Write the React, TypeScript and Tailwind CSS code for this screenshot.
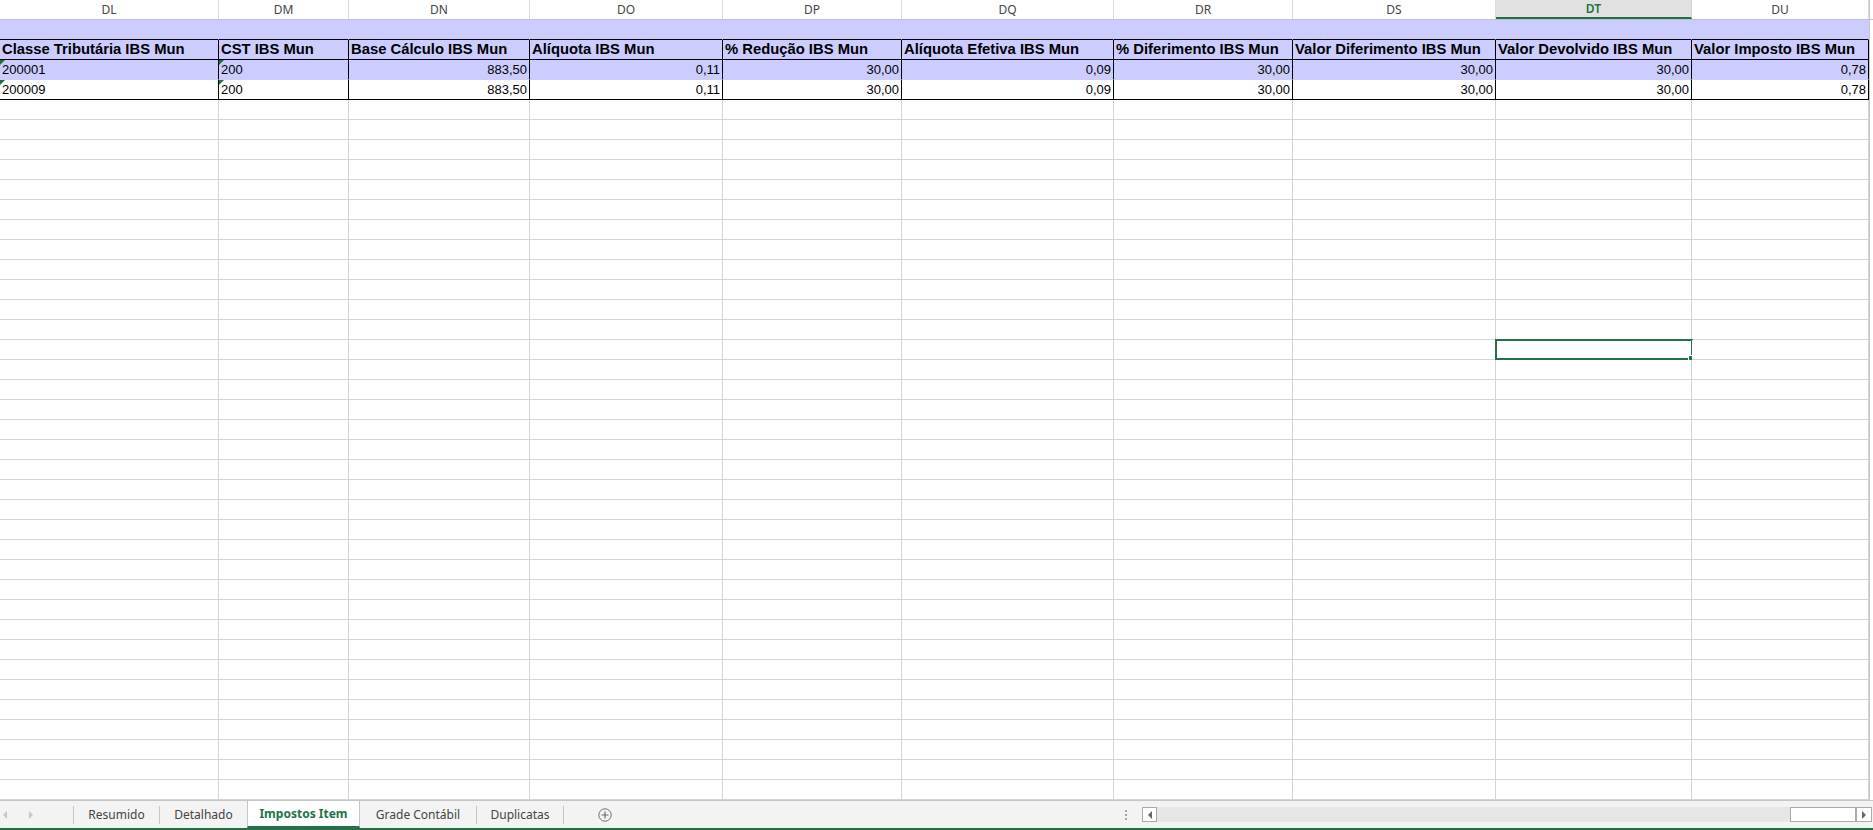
import React from 'react';

type Col = {
  id: string;
  w: string;
  head: string;
  v1: string;
  v2: string;
  right: boolean;
  flag?: boolean;
};

const cols: Col[] = [
  { id: 'DL', w: 'w-[219px]', head: 'Classe Tributária IBS Mun', v1: '200001', v2: '200009', right: false, flag: true },
  { id: 'DM', w: 'w-[130px]', head: 'CST IBS Mun', v1: '200', v2: '200', right: false, flag: true },
  { id: 'DN', w: 'w-[181px]', head: 'Base Cálculo IBS Mun', v1: '883,50', v2: '883,50', right: true },
  { id: 'DO', w: 'w-[193px]', head: 'Alíquota IBS Mun', v1: '0,11', v2: '0,11', right: true },
  { id: 'DP', w: 'w-[179px]', head: '% Redução IBS Mun', v1: '30,00', v2: '30,00', right: true },
  { id: 'DQ', w: 'w-[212px]', head: 'Alíquota Efetiva IBS Mun', v1: '0,09', v2: '0,09', right: true },
  { id: 'DR', w: 'w-[179px]', head: '% Diferimento IBS Mun', v1: '30,00', v2: '30,00', right: true },
  { id: 'DS', w: 'w-[203px]', head: 'Valor Diferimento IBS Mun', v1: '30,00', v2: '30,00', right: true },
  { id: 'DT', w: 'w-[196px]', head: 'Valor Devolvido IBS Mun', v1: '30,00', v2: '30,00', right: true },
  { id: 'DU', w: 'w-[177px]', head: 'Valor Imposto IBS Mun', v1: '0,78', v2: '0,78', right: true },
];

const ROWS = 39;
const SELECTED_ROW = 17;
const SELECTED_COL = 'DT';

// little green "number stored as text" marker
function Flag() {
  return (
    <svg className="absolute left-0 top-0" width="5" height="5" viewBox="0 0 5 5">
      <polygon points="0,0 5,0 0,5" fill="#1e7145" />
    </svg>
  );
}

function rowClasses(r: number) {
  if (r === 1) return 'bg-[#ccccff] border-r-[#ccccff] border-b-black';
  if (r === 2) return 'bg-[#ccccff] border-r-black border-b-black';
  if (r === 3) return 'bg-[#ccccff] border-r-black border-b-[#ccccff]';
  if (r === 4) return 'bg-white border-r-black border-b-black';
  return 'bg-white border-r-[#d4d4d4] border-b-[#d4d4d4]';
}

function Cell({ col, r }: { col: Col; r: number }) {
  let text = '';
  if (r === 2) text = col.head;
  if (r === 3) text = col.v1;
  if (r === 4) text = col.v2;

  const align = r !== 2 && col.right ? 'justify-end' : 'justify-start';
  const font =
    r === 2
      ? 'font-bold text-[14.8px] leading-[18px]'
      : 'text-[13px] leading-[16px]';

  return (
    <div
      className={`${col.w} ${rowClasses(r)} ${align} ${font} relative shrink-0 h-full border-r border-b flex items-end px-[2px] pb-[1px] whitespace-nowrap text-black`}
    >
      {(r === 3 || r === 4) && col.flag && <Flag />}
      {text && <span>{text}</span>}
      {r === SELECTED_ROW && col.id === SELECTED_COL && (
        <div className="absolute -left-[1px] -top-[1px] w-[198px] h-[21px] border-2 border-[#217346] pointer-events-none">
          <div className="absolute -right-[4px] -bottom-[4px] w-[7px] h-[7px] bg-[#217346] border border-white" />
        </div>
      )}
    </div>
  );
}

function Sep() {
  return <div className="w-px h-[18px] self-center bg-[#c6c6c6] shrink-0" />;
}

function SheetTabs() {
  return (
    <div className="h-[30px] shrink-0 flex items-stretch bg-[#f3f3f3] border-t border-t-[#c6c6c6] border-b-2 border-b-[#217346] font-['Noto_Sans',sans-serif] text-[12px] text-[#444]">
      <div className="w-[73px] shrink-0 flex items-center">
        <div className="ml-[3px] w-0 h-0 border-y-[4px] border-y-transparent border-r-[4px] border-r-[#c8c8c8]" />
        <div className="ml-[22px] w-0 h-0 border-y-[4px] border-y-transparent border-l-[4px] border-l-[#c8c8c8]" />
      </div>
      <Sep />
      <div className="w-[85px] shrink-0 flex items-center justify-center">Resumido</div>
      <Sep />
      <div className="w-[87px] shrink-0 flex items-center justify-center">Detalhado</div>
      <div className="w-[113px] shrink-0 flex items-center justify-center bg-white border-x border-x-[#c6c6c6] border-b-2 border-b-[#217346] font-bold text-[#217346]">
        Impostos Item
      </div>
      <div className="w-[116px] shrink-0 flex items-center justify-center">Grade Contábil</div>
      <Sep />
      <div className="w-[86px] shrink-0 flex items-center justify-center">Duplicatas</div>
      <Sep />
      <div className="ml-[34px] self-center">
        <svg width="14" height="14" viewBox="0 0 14 14">
          <circle cx="7" cy="7" r="6.2" fill="none" stroke="#6f6f6f" strokeWidth="1" />
          <path d="M7 3.5v7M3.5 7h7" stroke="#6f6f6f" strokeWidth="1.2" />
        </svg>
      </div>
      <div className="flex-1" />
      <div className="w-[22px] shrink-0 flex flex-col justify-center gap-[2px] pl-[5px]">
        <div className="w-[2px] h-[2px] bg-[#a6a6a6]" />
        <div className="w-[2px] h-[2px] bg-[#a6a6a6]" />
        <div className="w-[2px] h-[2px] bg-[#a6a6a6]" />
      </div>
      <div className="w-[730px] shrink-0 h-[15px] self-center flex mr-[1px]">
        <div className="w-[15px] shrink-0 bg-white border border-[#ababab] flex items-center justify-center">
          <div className="w-0 h-0 border-y-[4px] border-y-transparent border-r-[4px] border-r-[#666]" />
        </div>
        <div className="flex-1 bg-[#e6e6e6]" />
        <div className="w-[66px] shrink-0 bg-white border border-[#ababab]" />
        <div className="w-[16px] shrink-0 bg-white border border-[#ababab] flex items-center justify-center">
          <div className="w-0 h-0 border-y-[4px] border-y-transparent border-l-[4px] border-l-[#666]" />
        </div>
      </div>
    </div>
  );
}

export default function App() {
  const rows = Array.from({ length: ROWS }, (_, i) => i + 1);

  return (
    <div className="w-[1873px] h-[830px] overflow-hidden bg-white flex flex-col font-['Liberation_Sans',Arial,sans-serif]">
      {/* column letters */}
      <div className="h-[20px] shrink-0 flex border-b border-b-[#c0c0c0] font-['Noto_Sans',sans-serif] text-[12px]">
        {cols.map((c) =>
          c.id === SELECTED_COL ? (
            <div
              key={c.id}
              className={`${c.w} shrink-0 flex items-center justify-center bg-[#e1e1e1] border-r border-r-[#d4d4d4] border-b-2 border-b-[#217346] text-[#217346] font-semibold`}
            >
              {c.id}
            </div>
          ) : (
            <div
              key={c.id}
              className={`${c.w} shrink-0 flex items-center justify-center border-r border-r-[#dadada] text-[#444]`}
            >
              {c.id}
            </div>
          )
        )}
        <div className="flex-1 border-l border-l-[#c6c6c6]" />
      </div>

      {/* sheet rows */}
      <div className="flex-1 flex flex-col">
        {rows.map((r) => (
          <div key={r} className="h-[20px] shrink-0 flex">
            {cols.map((c) => (
              <Cell key={c.id} col={c} r={r} />
            ))}
            <div className="flex-1 border-l border-l-[#c6c6c6]" />
          </div>
        ))}
      </div>

      <SheetTabs />
    </div>
  );
}
